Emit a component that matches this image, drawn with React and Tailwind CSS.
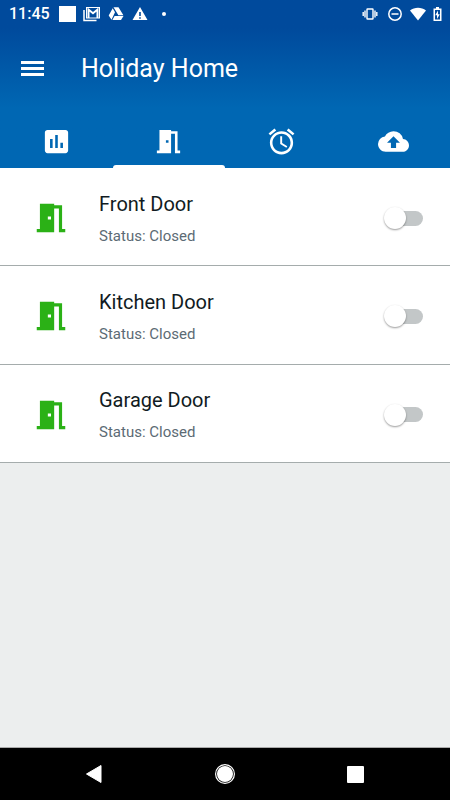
import { MdInsertChart, MdMeetingRoom, MdAlarm, MdBackup } from "react-icons/md";

const doors = ["Front Door", "Kitchen Door", "Garage Door"];

const tabs = [
  { label: "Statistics", Icon: MdInsertChart },
  { label: "Doors", Icon: MdMeetingRoom, active: true },
  { label: "Alarms", Icon: MdAlarm },
  { label: "Backup", Icon: MdBackup },
];

function StatusBar() {
  return (
    <div className="flex h-7 items-center justify-between pr-2 pl-[9px]">
      <div className="flex items-center">
        <span className="w-[50px] text-base leading-5 font-medium">11:45</span>
        <span className="h-4 w-[17px] bg-white" />
        <svg className="ml-[7px] h-4 w-[17px]" viewBox="0 0 17 16" fill="none" stroke="currentColor">
          <path d="M1 4v10.400h12.500" strokeWidth="1.500" />
          <rect x="3.500" y="1.500" width="13" height="10.500" strokeWidth="1" />
          <path d="M5.500 12V3.500L10 7.200l4.500-3.700V12" strokeWidth="2" />
        </svg>
        <svg className="ml-2 h-4 w-4" viewBox="0 0 16 16" fill="currentColor">
          <path d="M4.700 2.200 7 6.200 3.500 13.800.7 9.500zM5.500 1.300h5l4.900 8h-5zM6.600 10H15.500l-2.500 4H4.400z" />
        </svg>
        <svg className="ml-2 h-4 w-4" viewBox="0 0 16 16" fill="currentColor">
          <path d="M8 1 15.500 14H.5zM7.200 6v4h1.600V6zM7.200 11.200v1.600h1.600v-1.600z" fillRule="evenodd" />
        </svg>
        <span className="ml-[14px] h-1 w-1 rounded-full bg-white" />
      </div>
      <div className="flex items-center">
        <svg className="h-4 w-4" viewBox="0 0 16 16" fill="none" stroke="currentColor" strokeWidth="1.400">
          <rect x="5" y="3" width="6" height="10" rx="0.500" />
          <path d="M3 4.500v7M13 4.500v7M1.200 6v4M14.800 6v4" />
        </svg>
        <svg className="ml-[9px] h-4 w-4" viewBox="0 0 16 16" fill="none" stroke="currentColor" strokeWidth="1.500">
          <circle cx="8" cy="8" r="6.200" />
          <path d="M4.500 8h7" />
        </svg>
        <svg className="ml-[7px] h-4 w-4" viewBox="0 0 16 16" fill="currentColor">
          <path d="M0 4.500C4.500.9 11.500.9 16 4.500L8 14.500z" />
        </svg>
        <svg className="ml-[7px] h-4 w-[9px]" viewBox="0 0 9 16" fill="currentColor">
          <path d="M3 1h3v1.500h2.500v12.500h-8V2.500H3zM2 4v9.500h5V4z" fillRule="evenodd" />
          <path d="M5 4.500 2.200 9.300H4V13l2.800-4.800H5z" />
        </svg>
      </div>
    </div>
  );
}

function DoorRow({ name }) {
  return (
    <li className="flex items-center border-b border-[#a5acac] bg-white pt-[3px] pr-[27px] pl-8">
      <MdMeetingRoom className="h-[38px] w-[38px] shrink-0 text-[#2bb116]" />
      <div className="ml-[29px] flex-1 pt-[3px]">
        <h2 className="text-xl leading-6 text-[#111b22]">{name}</h2>
        <p className="mt-2 text-[15px] leading-6 text-[#5c6b75]">Status: Closed</p>
      </div>
      <label className="relative flex h-6 w-[39px] cursor-pointer items-center">
        <input type="checkbox" aria-label={name} className="peer sr-only" />
        <span className="ml-2 h-[15px] flex-1 rounded-full bg-[#c3c7c8] peer-checked:bg-[#80b3d9]" />
        <span className="absolute top-px left-0 h-[22px] w-[22px] rounded-full bg-white shadow-[0_1px_2px_rgba(0,0,0,0.4)] peer-checked:left-4" />
      </label>
    </li>
  );
}

export default function App() {
  return (
    <div className="flex min-h-screen flex-col bg-[#eceeee] font-[Roboto,sans-serif]">
      <header className="bg-linear-to-b from-[#004a9c] from-[28px] to-[#0067b3] to-[108px] text-white">
        <StatusBar />
        <div className="flex h-20 items-center px-[21px]">
          <button aria-label="Open menu">
            <svg className="h-4 w-[23px]" viewBox="0 0 23 16" fill="currentColor">
              <path d="M0 1h23v3H0zM0 7h23v3H0zM0 13h23v3H0z" />
            </svg>
          </button>
          <h1 className="ml-[37px] pt-0.5 text-[25px] leading-8">Holiday Home</h1>
        </div>
        <nav className="grid h-[60px] grid-cols-4">
          {tabs.map(({ label, Icon, active }) => (
            <button key={label} aria-label={label} className="relative flex items-start justify-center pt-[18px]">
              <Icon className="h-[31px] w-[31px]" />
              {active && <span className="absolute inset-x-0 bottom-0 h-[3px] rounded-t-[3px] bg-white" />}
            </button>
          ))}
        </nav>
      </header>
      <main className="flex-1">
        <ul className="grid min-h-[295px] auto-rows-fr">{doors.map((name) => <DoorRow key={name} name={name} />)}</ul>
      </main>
      <footer className="flex h-[53px] items-center justify-between border-t border-[#aaaaaa] bg-black px-[86px] text-white">
        <button aria-label="Back">
          <svg className="h-5 w-4" viewBox="0 0 16 20" fill="currentColor"><path d="M15 1.500v17L.5 10z" stroke="currentColor" strokeLinejoin="round" /></svg>
        </button>
        <button aria-label="Home">
          <svg className="h-5 w-5" viewBox="0 0 20 20" fill="currentColor"><circle cx="10" cy="10" r="9.400" fill="none" stroke="currentColor" strokeWidth="1.200" /><circle cx="10" cy="10" r="8" /></svg>
        </button>
        <button aria-label="Recent apps" className="h-[17px] w-[17px] rounded-[1px] bg-white" />
      </footer>
    </div>
  );
}
